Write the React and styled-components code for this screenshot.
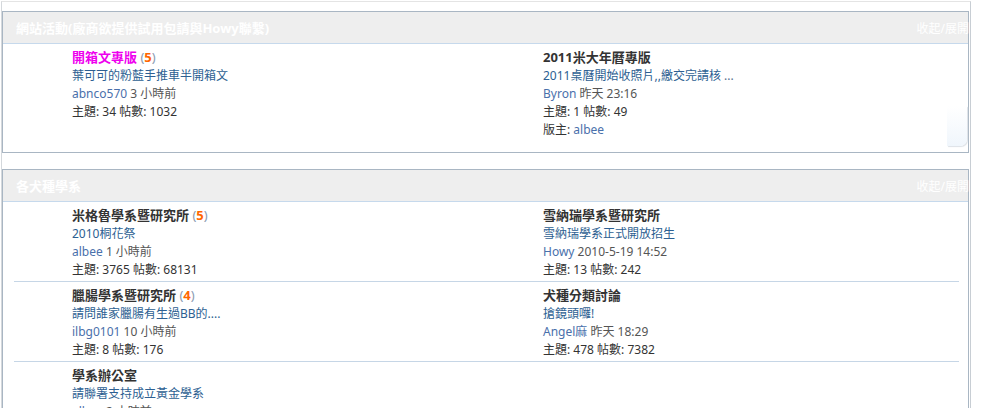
import React from 'react';
import styled, { createGlobalStyle } from 'styled-components';

const GlobalStyle = createGlobalStyle`
  body {
    margin: 0;
    background: #fff;
    font-family: "Noto Sans", "Noto Sans CJK TC", sans-serif;
    font-size: 12px;
    color: #333;
  }
`;

const Wrapper = styled.div`
  margin: 1px 0 0 1px;
  width: 968px;
  border-top: 1px solid #e4e4e4;
  border-left: 1px solid #d4d8dc;
  border-right: 1px solid #c8ced4;
  padding-top: 9px;
  min-height: 420px;
`;

const Box = styled.div`
  position: relative;
  margin: 0 1px 16px 0;
  border: 1px solid #a9b6c3;
  background: #fff;
`;

const BoxHeader = styled.div`
  display: flex;
  align-items: center;
  justify-content: space-between;
  height: 31px;
  padding-left: 13px;
  background: #eeeeee;
  border-bottom: 1px solid #c6d9ec;
  color: #fff;
`;

const BoxTitle = styled.span`
  font-weight: bold;
  font-size: 13px;
`;

const Toggle = styled.span`
  font-size: 12px;
  color: #fff;
  margin-right: -1px;
`;

const Table = styled.div`
  margin: 0 9px 0 11px;
`;

const Row = styled.div`
  display: grid;
  grid-template-columns: 471px 1fr;
  padding: 3px 0 ${(p) => (p.$pb ? p.$pb : 2)}px;
  border-bottom: ${(p) => (p.$last ? 'none' : '1px solid #c6d6e6')};
`;

const Cell = styled.div`
  padding-left: 58px;
  line-height: 18px;
`;

const ForumName = styled.div`
  line-height: 20px;
  font-weight: bold;
  font-size: 13px;
  color: ${(p) => p.$color || '#333'};
`;

const Count = styled.span`
  font-weight: normal;
  color: #8a9ab0;
  & strong {
    color: #ff6600;
    font-weight: bold;
  }
`;

const Subject = styled.div`
  color: #2d5f92;
  white-space: nowrap;
`;

const More = styled.span`
  color: #5a7290;
`;

const Meta = styled.div`
  color: #555;
`;

const User = styled.span`
  color: #4a70ab;
`;

const Stats = styled.div`
  color: #333;
`;

const Corner = styled.div`
  position: absolute;
  right: 1px;
  bottom: 6px;
  width: 20px;
  height: 40px;
  border-bottom-right-radius: 7px;
  background: linear-gradient(#ffffff, #f0f6fc);
  box-shadow: 1px 1px 1px #dde2e7;
`;

const Forum = ({ f }) => (
  <Cell>
    <ForumName $color={f.color}>
      {f.name}
      {f.count && (
        <Count>
          {' '}(<strong>{f.count}</strong>)
        </Count>
      )}
    </ForumName>
    <Subject>
      {f.subject}
      {f.more && <More> ...</More>}
    </Subject>
    <Meta>
      <User>{f.user}</User> {f.time}
    </Meta>
    <Stats>
      主題: {f.threads} 帖數: {f.posts}
    </Stats>
    {f.mod && (
      <Stats>
        版主: <User>{f.mod}</User>
      </Stats>
    )}
  </Cell>
);

const sections = [
  {
    title: '網站活動(廠商欲提供試用包請與Howy聯繫)',
    corner: true,
    pb: 13,
    rows: [
      [
        { name: '開箱文專版', color: '#ee00ee', count: 5, subject: '葉可可的粉藍手推車半開箱文', user: 'abnco570', time: '3 小時前', threads: 34, posts: 1032 },
        { name: '2011米大年曆專版', subject: '2011桌曆開始收照片,,繳交完請核', more: true, user: 'Byron', time: '昨天 23:16', threads: 1, posts: 49, mod: 'albee' }
      ]
    ]
  },
  {
    title: '各犬種學系',
    rows: [
      [
        { name: '米格魯學系暨研究所', count: 5, subject: '2010桐花祭', user: 'albee', time: '1 小時前', threads: 3765, posts: 68131 },
        { name: '雪納瑞學系暨研究所', subject: '雪納瑞學系正式開放招生', user: 'Howy', time: '2010-5-19 14:52', threads: 13, posts: 242 }
      ],
      [
        { name: '臘腸學系暨研究所', count: 4, subject: '請問誰家臘腸有生過BB的....', user: 'ilbg0101', time: '10 小時前', threads: 8, posts: 176 },
        { name: '犬種分類討論', subject: '搶鏡頭囉!', user: 'Angel麻', time: '昨天 18:29', threads: 478, posts: 7382 }
      ],
      [
        { name: '學系辦公室', subject: '請聯署支持成立黃金學系', user: 'albee', time: '2 小時前', threads: 52, posts: 611 }
      ]
    ]
  }
];

export default function App() {
  return (
    <>
      <GlobalStyle />
      <Wrapper>
        {sections.map((s) => (
          <Box key={s.title}>
            <BoxHeader>
              <BoxTitle>{s.title}</BoxTitle>
              <Toggle>收起/展開</Toggle>
            </BoxHeader>
            <Table>
              {s.rows.map((r, i) => (
                <Row key={i} $last={i === s.rows.length - 1} $pb={s.pb}>
                  {r.map((f) => (
                    <Forum key={f.name} f={f} />
                  ))}
                </Row>
              ))}
            </Table>
            {s.corner && <Corner />}
          </Box>
        ))}
      </Wrapper>
    </>
  );
}
